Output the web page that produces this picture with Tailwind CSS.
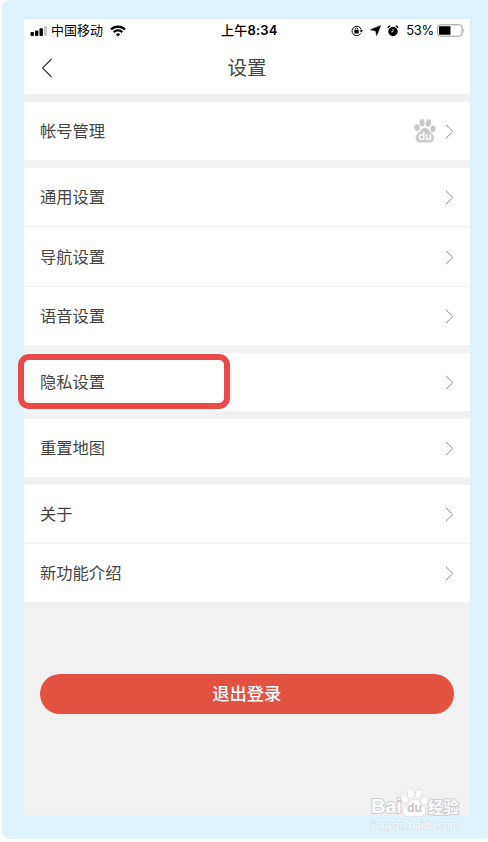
<!DOCTYPE html>
<html lang="zh-CN">
<head>
  <meta charset="UTF-8" />
  <meta name="viewport" content="width=device-width, initial-scale=1.0" />
  <title>设置</title>
  <script src="https://cdn.jsdelivr.net/npm/@tailwindcss/browser@4"></script>
</head>
<body class="bg-white h-[842px] overflow-hidden font-['Inter','Noto_Sans_CJK_SC',sans-serif] text-[#444]">

  <svg class="hidden">
    <symbol id="chevron" viewBox="0 0 9 15">
      <path d="M1 .8l6.800 6.700L1 14.200" fill="none" stroke="#909090" />
    </symbol>
    <symbol id="paw" viewBox="0 0 22 25" overflow="visible">
      <ellipse cx="3" cy="9.600" rx="2.700" ry="3.500" transform="rotate(-12 3 9.600)" />
      <ellipse cx="8" cy="4.700" rx="2.600" ry="3.800" />
      <ellipse cx="14.400" cy="5" rx="2.600" ry="3.800" transform="rotate(12 14.400 5)" />
      <ellipse cx="19" cy="11" rx="2.600" ry="3.400" transform="rotate(8 19 11)" />
      <path d="M11 10c2.600 0 3.600 1.800 4.900 3.500 1.500 2 4.100 3.200 4.100 6.400 0 3-2 4.600-4.700 4.600H6.300C3.500 24.500 1.600 22.700 1.600 20c0-3.200 2.600-4.500 4.300-6.500C7.300 11.800 8.500 10 11 10z" />
    </symbol>
  </svg>

  <div class="relative ml-0.5 h-[839px] rounded-l-[8px] rounded-br-[3px] bg-[#ddf2fd] pt-[19px] pl-[22px]">
    <div class="w-[446px] h-[796px] bg-[#f1f1f1]">

      <!-- 状态栏 + 标题 -->
      <header class="h-[75px] bg-white">
        <div class="relative flex items-center h-[23px] pl-[6px] pr-[6px] text-[13px] leading-none text-black">
          <svg class="w-[17px] h-3" viewBox="0 0 17 12">
            <rect x="0.500" y="7" width="3.400" height="4" rx="1" />
            <rect x="5" y="5.500" width="3.400" height="5.500" rx="1" />
            <rect x="9.500" y="3.300" width="3.400" height="7.700" rx="1" />
            <rect x="14" y="1" width="3" height="10" rx="1" fill="#c8c8c8" />
          </svg>
          <span class="ml-[4px]">中国移动</span>
          <svg class="ml-[7px] w-4 h-3" viewBox="0 0 16 12" fill="none" stroke="#000" stroke-width="2.200">
            <path d="M1 4.400a10 10 0 0 1 14 0M3.700 7.200a6.100 6.100 0 0 1 8.600 0" />
            <path d="M8 11.500L5.800 9.300a3.100 3.100 0 0 1 4.400 0z" fill="#000" stroke="none" />
          </svg>
          <span class="absolute left-[197px] font-semibold text-[13px] tracking-[.2px] whitespace-nowrap"><span class="font-medium">上午</span>8:34</span>

          <div class="ml-auto flex items-center">
            <svg class="w-3 h-3" viewBox="0 0 12 12">
              <path d="M9.800 8.300A4.700 4.700 0 1 1 10.200 4.500" fill="none" stroke="#000" />
              <path d="M8.500 5.200h3.500l-1.700 2.300z" />
              <rect x="3.300" y="5.100" width="4.400" height="3.400" rx=".4" />
              <path d="M4.200 5.300V4.200a1.300 1.300 0 0 1 2.600 0v1.100" fill="none" stroke="#000" stroke-width=".9" />
            </svg>
            <svg class="ml-[7px] w-[11px] h-[11px]" viewBox="0 0 11 11">
              <path d="M10.700.4L6.700 10.800 5.600 5.900.3 4.800z" stroke="#000" stroke-width=".4" />
            </svg>
            <svg class="ml-[6px] w-[12px] h-3" viewBox="0 0 12 12">
              <circle cx="6" cy="6.500" r="4.700" />
              <path d="M1 3A3 3 0 0 1 3.300.9M8.700.9A3 3 0 0 1 11 3" fill="none" stroke="#000" stroke-width="1.400" />
              <path d="M6 4v2.800H4.200" fill="none" stroke="#fff" stroke-width=".8" />
            </svg>
            <span class="ml-[7px] mt-px text-[12.900px] tracking-[-.2px]">53%</span>
            <svg class="ml-[3px] w-7 h-[13px] -mr-px" viewBox="0 0 28 13">
              <rect x=".6" y=".8" width="24.500" height="11.400" rx="2.800" fill="none" stroke="#999" />
              <rect x="2" y="2.300" width="11.500" height="8.400" rx=".8" />
              <path d="M26.500 4.500q1.300 2 0 4z" fill="#888" />
            </svg>
          </div>
        </div>
        <div class="relative flex items-center justify-center h-[52px]">
          <svg class="absolute left-[17px] top-[16px] w-[12px] h-5" viewBox="0 0 12 20">
            <path d="M10.500 1L1.500 10l9 9" fill="none" stroke="#333" stroke-width="1.100" />
          </svg>
          <h1 class="text-[19.500px] leading-none mt-[2px]">设置</h1>
        </div>
      </header>

      <!-- 设置列表 -->
      <ul class="mt-2 bg-white text-[16.300px] leading-none">
        <li class="flex items-center justify-between h-[58px] px-4">
          帐号管理
          <span class="flex items-center">
            <span class="relative mr-[9px] -mt-[2px]">
              <svg class="w-[22px] h-[25px] fill-[#c9c9c9]"><use href="#paw" /></svg>
              <b class="absolute left-0 top-[12px] w-[22px] text-center text-[11px] leading-[12px] font-semibold text-white">du</b>
            </span>
            <svg class="w-[9px] h-[15px]"><use href="#chevron" /></svg>
          </span>
        </li>
      </ul>
      <ul class="mt-2 h-[177px] bg-white text-[16.300px] leading-none">
        <li class="flex items-center justify-between h-[59px] px-4 border-b border-[#f1f1f1]">通用设置 <svg class="w-[9px] h-[15px]"><use href="#chevron" /></svg></li>
        <li class="flex items-center justify-between h-[60px] px-4 pt-px border-b border-[#f1f1f1]">导航设置 <svg class="w-[9px] h-[15px]"><use href="#chevron" /></svg></li>
        <li class="flex items-center justify-between h-[58px] px-4">语音设置 <svg class="w-[9px] h-[15px]"><use href="#chevron" /></svg></li>
      </ul>
      <ul class="mt-2 bg-white text-[16.300px] leading-none">
        <li class="relative flex items-center justify-between h-[58px] px-4">
          隐私设置 <svg class="w-[9px] h-[15px]"><use href="#chevron" /></svg>
          <!-- 红框标注 -->
          <span class="absolute left-[-6px] top-[1px] w-[212px] h-[55px] rounded-[11px] border-[6px] border-[#eb4a4a]"></span>
        </li>
      </ul>
      <ul class="mt-2 bg-white text-[16.300px] leading-none">
        <li class="flex items-center justify-between h-[58px] px-4">重置地图 <svg class="w-[9px] h-[15px]"><use href="#chevron" /></svg></li>
      </ul>
      <ul class="mt-2 bg-white text-[16.300px] leading-none">
        <li class="flex items-center justify-between h-[59px] px-4 border-b border-[#f1f1f1]">关于 <svg class="w-[9px] h-[15px]"><use href="#chevron" /></svg></li>
        <li class="flex items-center justify-between h-[58px] px-4">新功能介绍 <svg class="w-[9px] h-[15px]"><use href="#chevron" /></svg></li>
      </ul>

      <button class="block mt-[72px] ml-4 w-[413.500px] h-10 rounded-full bg-[#e35141] text-white text-[17.300px] leading-none font-medium">退出登录</button>
    </div>

    <!-- 水印 -->
    <div class="absolute left-[369px] top-[787px] w-[92px] text-[#fafafa] [-webkit-text-stroke:1.800px_#cbcdce] [paint-order:stroke_fill]">
      <div class="flex items-end h-[30px] leading-none">
        <b class="w-[30px] text-[20px] leading-[21px] tracking-[-.2px] font-['Liberation_Sans']">Bai</b>
        <span class="relative">
          <svg class="w-[27px] h-[29px] overflow-visible fill-[#fafafa] stroke-[#cbcdce] stroke-[.8px]" viewBox="0 0 22 25" preserveAspectRatio="none"><use href="#paw" width="22" height="25" /></svg>
          <b class="absolute left-0 top-[14px] w-[27px] text-center text-[12px] leading-[12px] text-[#c8c8c8] [-webkit-text-stroke:0]">du</b>
        </span>
        <b class="text-[15.500px] leading-[19px] whitespace-nowrap">经验</b>
      </div>
      <div class="mt-[2px] text-[11px] leading-[12px] tracking-[-.05px] whitespace-nowrap font-['Liberation_Sans'] text-white [-webkit-text-stroke:1px_#cadae3]">jingyan.baidu.com</div>
    </div>
  </div>

</body>
</html>
